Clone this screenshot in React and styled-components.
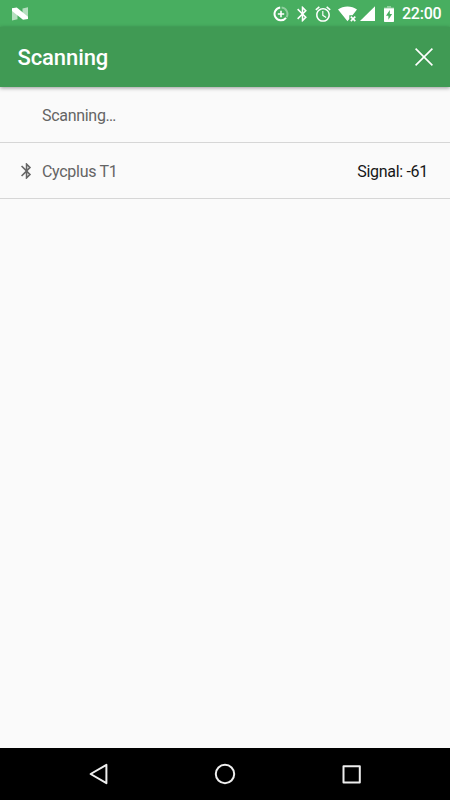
import React from "react";
import styled, { createGlobalStyle } from "styled-components";

const GlobalStyle = createGlobalStyle`
  body {
    margin: 0;
    background: #fafafa;
    font-family: Roboto, "Liberation Sans", sans-serif;
  }
`;

const Screen = styled.div`
  display: flex;
  flex-direction: column;
  height: 100vh;
  background: #fafafa;
`;

const StatusBar = styled.div`
  display: flex;
  align-items: center;
  box-sizing: border-box;
  height: 27px;
  padding: 0 9px 0 12px;
  background: #48ae60;
  color: white;
`;

const StatusIcon = styled.svg`
  display: block;
  flex: none;
  width: ${(props) => props.$width}px;
  height: 16px;
  margin-right: ${(props) => props.$gap || 0}px;
  fill: currentColor;
`;

const Spacer = styled.div`
  flex: 1;
`;

const Clock = styled.span`
  width: 39px;
  padding-top: 1px;
  font-size: 16px;
  font-weight: 500;
  line-height: 26px;
  letter-spacing: -0.25px;
  white-space: nowrap;
`;

const AppBar = styled.header`
  display: flex;
  align-items: center;
  justify-content: space-between;
  box-sizing: border-box;
  height: 60px;
  padding: 0 17px 0 17.5px;
  background: #409a54;
  color: white;
  box-shadow: 0 1px 4px rgba(0, 0, 0, 0.4);
  z-index: 1;
`;

const Title = styled.h1`
  margin: 0;
  padding-top: 2px;
  font-size: 22px;
  font-weight: 500;
  line-height: 30px;
  letter-spacing: -0.1px;
`;

const CloseButton = styled.button`
  display: flex;
  padding: 0;
  border: 0;
  background: none;
  color: white;
  cursor: pointer;
`;

const DeviceList = styled.ul`
  flex: 1;
  margin: 0;
  padding: 0;
  list-style: none;
`;

const DeviceRow = styled.li`
  display: flex;
  align-items: center;
  box-sizing: border-box;
  height: 56px;
  padding: 0 22px 0 20px;
  border-bottom: 1px solid #d6d6d6;
  font-size: 16px;
  letter-spacing: -0.3px;
`;

const DeviceIcon = styled.div`
  width: 22px;
  color: #666;
`;

const DeviceName = styled.span`
  flex: 1;
  padding-top: 2px;
  color: #646464;
`;

const Signal = styled.span`
  padding-top: 2px;
  color: #161616;
`;

const NavBar = styled.nav`
  display: flex;
  align-items: center;
  justify-content: space-between;
  box-sizing: border-box;
  height: 52px;
  padding: 0 88px;
  background: black;
`;

const NavIcon = styled.svg`
  display: block;
  width: 22px;
  height: 22px;
  fill: none;
  stroke: #eee;
  stroke-width: 2;
  stroke-linejoin: round;
`;

const BLUETOOTH_PATH =
  "M17.71 7.71L12 2h-1v7.59L6.41 5 5 6.41 10.59 12 5 17.59 6.41 19 11 14.41V22h1l5.71-5.71-4.3-4.29 4.3-4.29zM13 5.83l1.88 1.88L13 9.59V5.83zm1.88 10.46L13 18.17v-3.76l1.88 1.88z";

const ALARM_PATH =
  "M22 5.72l-4.6-3.86-1.29 1.53 4.6 3.86L22 5.72zM7.88 3.39L6.6 1.86 2 5.71l1.29 1.53 4.59-3.85zM12.5 8H11v6l4.75 2.85.75-1.23-4-2.37V8zM12 4c-4.97 0-9 4.03-9 9s4.02 9 9 9c4.97 0 9-4.03 9-9s-4.03-9-9-9zm0 16c-3.87 0-7-3.13-7-7s3.13-7 7-7 7 3.13 7 7-3.13 7-7 7z";

const devices = [{ name: "Cycplus T1", signal: -61 }];

function StatusIcons() {
  return (
    <>
      {/* data saver */}
      <StatusIcon $width={16} $gap={8} viewBox="0 0 16 16">
        <g fill="none" stroke="currentColor" strokeWidth="2">
          <path d="M8.6 1.6A6.4 6.4 0 0 1 13.5 11.3" opacity="0.4" />
          <path d="M7.2 1.6A6.4 6.4 0 1 0 13 11.9" />
          <path d="M8 4.8v6.4M4.8 8h6.4" strokeWidth="1.6" />
        </g>
      </StatusIcon>
      <StatusIcon $width={10} $gap={8} viewBox="4.9 1.6 12.9 20.8">
        <path d={BLUETOOTH_PATH} />
      </StatusIcon>
      <StatusIcon $width={16} $gap={7} viewBox="1.6 1.4 20.8 20.8">
        <path d={ALARM_PATH} />
      </StatusIcon>
      {/* wifi without a connection */}
      <StatusIcon $width={20} $gap={2} viewBox="0 0 20 16">
        <path d="M0 3.6C5.3-.4 13.7-.4 19 3.6l-4.5 5.6h-3.2v3.9l-1.8 2.2z" />
        <path
          d="M12.8 10.6l4.5 4.5M17.3 10.6l-4.5 4.5"
          fill="none"
          stroke="currentColor"
          strokeWidth="1.6"
        />
      </StatusIcon>
      <StatusIcon $width={15} $gap={9} viewBox="0 0 15 16">
        <path d="M15 .2V15H0z" />
      </StatusIcon>
      {/* charging battery */}
      <StatusIcon $width={10} $gap={8} viewBox="0 0 10 16">
        <path d="M3 0h4v1.6H3z" opacity="0.4" />
        <path d="M0 1.6h10v2H0z" opacity="0.5" />
        <path
          fillRule="evenodd"
          d="M0 2.6h10V15.3q0 .7-.7.7H.7Q0 16 0 15.3zM5.8 4L2 9.8h2.4v4L8.1 8H5.8z"
        />
      </StatusIcon>
    </>
  );
}

export default function App() {
  return (
    <Screen>
      <GlobalStyle />
      <StatusBar>
        <StatusIcon $width={16} viewBox="0 0 16 16">
          <path d="M0 2.2L5.5 5v8.2L0 14.4zM16 1.2v11.4l-5.5-2V2.4z" opacity="0.6" />
          <path d="M0 2.2L4.8 1.4 16 10.8v2.2l-5 .8L0 4.9z" />
        </StatusIcon>
        <Spacer />
        <StatusIcons />
        <Clock>22:00</Clock>
      </StatusBar>
      <AppBar>
        <Title>Scanning</Title>
        <CloseButton aria-label="Close">
          <svg width="18" height="18" viewBox="0 0 18 18">
            <path
              d="M.6.6l16.8 16.8M17.4.6L.6 17.4"
              stroke="currentColor"
              strokeWidth="1.6"
            />
          </svg>
        </CloseButton>
      </AppBar>
      <DeviceList>
        <DeviceRow>
          <DeviceIcon />
          <DeviceName>Scanning…</DeviceName>
        </DeviceRow>
        {devices.map((device) => (
          <DeviceRow key={device.name}>
            <DeviceIcon>
              <StatusIcon $width={12} viewBox="4.2 1.9 14.2 20.2">
                <path d={BLUETOOTH_PATH} />
              </StatusIcon>
            </DeviceIcon>
            <DeviceName>{device.name}</DeviceName>
            <Signal>Signal: {device.signal}</Signal>
          </DeviceRow>
        ))}
      </DeviceList>
      <NavBar>
        <NavIcon viewBox="0 0 22 22">
          <path d="M2.6 11L18.4 1.8V20.2z" />
        </NavIcon>
        <NavIcon viewBox="0 0 22 22">
          <circle cx="11" cy="11" r="9.2" />
        </NavIcon>
        <NavIcon viewBox="0 0 22 22">
          <path d="M3.5 3.2h16.3v16.3H3.5z" />
        </NavIcon>
      </NavBar>
    </Screen>
  );
}
